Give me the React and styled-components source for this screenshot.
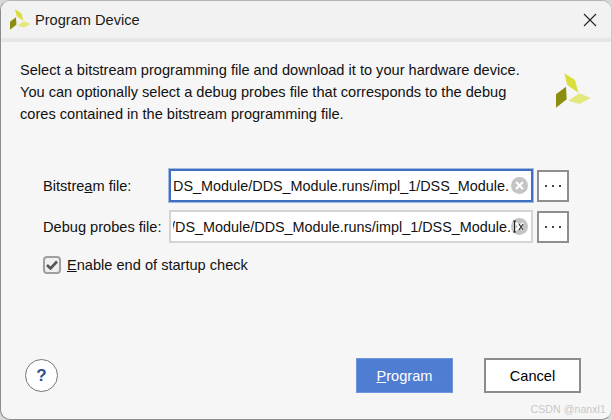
import React from 'react';
import styled, { createGlobalStyle } from 'styled-components';

const Global = createGlobalStyle`
  html, body { margin: 0; padding: 0; background: #d8d8d8; }
  * { box-sizing: border-box; }
`;

const Dialog = styled.div`
  position: relative;
  width: 612px;
  height: 420px;
  display: flex;
  flex-direction: column;
  background: #f6f6f6;
  border: 1px solid #8c8c8c;
  border-top-color: #b4b4b4;
  border-right-color: #c8c8c8;
  border-radius: 10px;
  overflow: hidden;
  font-family: "Liberation Sans", Arial, sans-serif;
  color: #111;
`;

const TitleBar = styled.div`
  height: 41px;
  flex: none;
  display: flex;
  align-items: center;
  gap: 4px;
  padding: 0 14px 0 9px;
  background: #f2f2f2;
  border-bottom: 4px solid #e6e6e6;
`;

const Title = styled.span`
  flex: 1;
  font-size: 14.6px;
  color: #1a1a1a;
`;

const Body = styled.div`
  flex: 1;
  display: flex;
  flex-direction: column;
  padding: 17px 20px 26px 19px;
`;

const Intro = styled.div`
  display: flex;
  justify-content: space-between;
  align-items: flex-start;
`;

const Message = styled.p`
  margin: 0;
  font-size: 14.6px;
  line-height: 22px;
`;

const LogoSlot = styled.div`
  margin-top: 14px;
  line-height: 0;
`;

const Form = styled.div`
  display: grid;
  grid-template-columns: 126px 364px 32px;
  row-gap: 8px;
  align-items: center;
  margin: 44px 0 0 23px;
`;

const Label = styled.label`
  font-size: 14.6px;
`;

const PathBox = styled.div`
  height: 33px;
  display: flex;
  align-items: center;
  padding: 0 3px 0 2px;
  background: #fff;
  border: ${p => (p.$focused ? '2px solid #3f6fc4' : '2px solid #d4d4d4')};
  box-shadow: ${p => (p.$focused ? '0 0 0 1px rgba(63, 111, 196, 0.45)' : 'none')};
`;

const PathText = styled.div`
  flex: 1;
  min-width: 0;
  display: flex;
  justify-content: flex-end;
  overflow: hidden;
  white-space: nowrap;
  font-size: 14.4px;
`;

const Clear = styled.span`
  position: relative;
  flex: none;
  width: 17px;
  height: 17px;
  margin-left: ${p => (p.$tight ? 0 : 2)}px;
  display: block;
`;

const CursorMark = styled.svg`
  position: absolute;
  left: 1px;
  top: 2px;
`;

const Browse = styled.button`
  width: 32px;
  height: 32px;
  margin-left: 4px;
  padding: 0;
  display: flex;
  align-items: center;
  justify-content: center;
  gap: 5px;
  background: #fff;
  border: 2px solid #8e8e8e;
`;

const Dot = styled.i`
  width: 2px;
  height: 2px;
  background: #444;
`;

const CheckRow = styled.div`
  display: flex;
  align-items: center;
  gap: 6px;
  margin: 13px 0 0 23px;
  font-size: 14.6px;
`;

const CheckBox = styled.span`
  width: 18px;
  height: 18px;
  display: flex;
  align-items: center;
  justify-content: center;
  background: #f0f0f0;
  border: 2px solid #a0a0a0;
  border-radius: 4px;
`;

const Footer = styled.div`
  margin-top: auto;
  margin-right: 10px;
  display: flex;
  align-items: center;
`;

const Help = styled.button`
  width: 33px;
  height: 33px;
  margin-left: 5px;
  padding: 0;
  background: #fff;
  border: 1px solid #777;
  border-radius: 50%;
  font: bold 17px "Liberation Sans", Arial, sans-serif;
  color: #2f4f8f;
`;

const Action = styled.button`
  width: 97px;
  height: 35px;
  padding: 0;
  font: 14.6px "Liberation Sans", Arial, sans-serif;
  color: ${p => (p.$primary ? '#fff' : '#000')};
  background: ${p => (p.$primary ? '#4f7dd1' : '#fff')};
  border: ${p => (p.$primary ? '1px solid #6f95dc' : '2px solid #8c8c8c')};
  margin-left: ${p => (p.$primary ? 'auto' : '31px')};
`;

const Watermark = styled.span`
  position: absolute;
  right: 5px;
  bottom: 4px;
  font-size: 10.5px;
  letter-spacing: 0.1px;
  color: #c8c8c8;
`;

const Logo = ({ size }) => (
  <svg width={size} height={size} viewBox="0 0 35 35">
    <path d="M8.3 0.3L19 7L22.3 19.7L11.3 12Z" fill="#d8de3c" />
    <path d="M10 13.7L10.7 26.3L0 34.7V21.3Z" fill="#8b8c10" />
    <path d="M12.3 27.7L23.3 20.3L34.7 25L23.3 31Z" fill="#e4e87c" />
  </svg>
);

const ClearIcon = () => (
  <svg width="17" height="17" viewBox="0 0 17 17">
    <circle cx="8.5" cy="8.5" r="8.5" fill="#c4c4c4" />
    <path d="M5 5L12 12M12 5L5 12" stroke="#fff" strokeWidth="2.2" />
  </svg>
);

export default function App() {
  return (
    <>
      <Global />
      <Dialog>
        <TitleBar>
          <Logo size={21} />
          <Title>Program Device</Title>
          <svg width="14" height="14" viewBox="0 0 14 14">
            <path d="M1 1L13 13M13 1L1 13" stroke="#222" strokeWidth="1.1" />
          </svg>
        </TitleBar>
        <Body>
          <Intro>
            <Message>
              Select a bitstream programming file and download it to your hardware device.<br />
              You can optionally select a debug probes file that corresponds to the debug<br />
              cores contained in the bitstream programming file.
            </Message>
            <LogoSlot><Logo size={35} /></LogoSlot>
          </Intro>
          <Form>
            <Label>Bitstre<u>a</u>m file:</Label>
            <PathBox $focused>
              <PathText>DS_Module/DDS_Module.runs/impl_1/DSS_Module.</PathText>
              <Clear><ClearIcon /></Clear>
            </PathBox>
            <Browse><Dot /><Dot /><Dot /></Browse>
            <Label>Debu<u>g</u> probes file:</Label>
            <PathBox>
              <PathText>/DS_Module/DDS_Module.runs/impl_1/DSS_Module.</PathText>
              <Clear $tight>
                <ClearIcon />
                <CursorMark width="12" height="14" viewBox="0 0 12 14">
                  <path d="M1 1H4M2.5 1V12M1 12H4" stroke="#222" strokeWidth="1" fill="none" />
                  <path d="M7 4L11 10M11 4L7 10" stroke="#333" strokeWidth="1.2" />
                </CursorMark>
              </Clear>
            </PathBox>
            <Browse><Dot /><Dot /><Dot /></Browse>
          </Form>
          <CheckRow>
            <CheckBox>
              <svg width="12" height="10" viewBox="0 0 12 10">
                <path d="M1 5L4.5 8.5L11 1.5" stroke="#555" strokeWidth="2.6" fill="none" />
              </svg>
            </CheckBox>
            <span><u>E</u>nable end of startup check</span>
          </CheckRow>
          <Footer>
            <Help>?</Help>
            <Action $primary><u>P</u>rogram</Action>
            <Action>Cancel</Action>
          </Footer>
        </Body>
        <Watermark>CSDN @nanxl1</Watermark>
      </Dialog>
    </>
  );
}
